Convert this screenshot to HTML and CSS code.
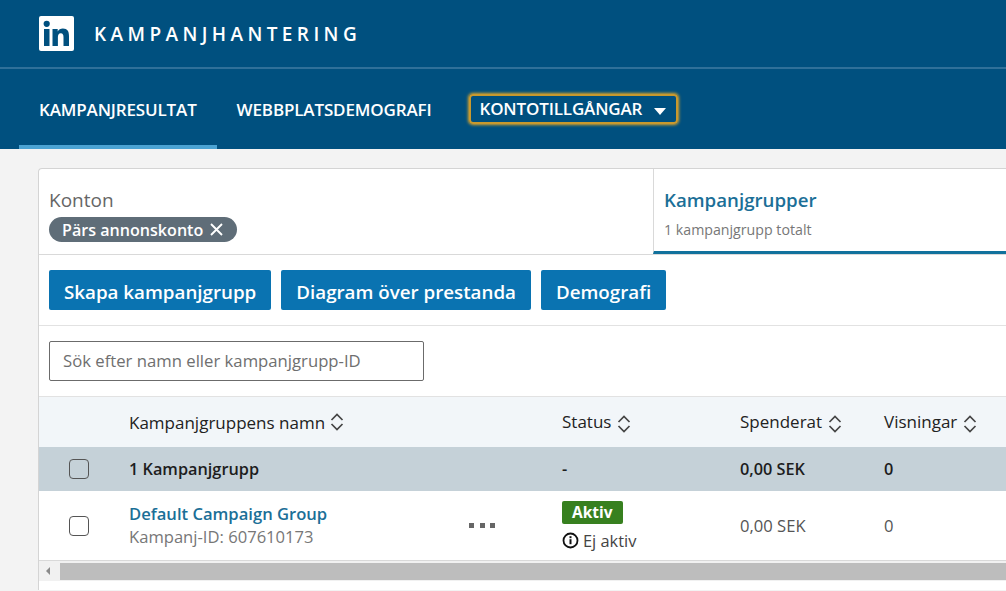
FILE: index.html
```html
<!DOCTYPE html>
<html lang="sv">
<head>
    <meta charset="UTF-8">
    <meta name="viewport" content="width=device-width, initial-scale=1.0">
    <title>Kampanjhantering</title>
    <link rel="stylesheet" href="styles.css">
</head>
<body>

<header class="topbar">
    <svg class="logo" width="35" height="35" viewBox="0 0 35 35">
        <rect width="35" height="35" rx="2" fill="#fff"/>
        <rect x="5" y="13" width="5.5" height="17" fill="#00507f"/>
        <circle cx="7.7" cy="7.8" r="3.1" fill="#00507f"/>
        <path d="M13.5 13h5.2v2.4c.9-1.6 2.8-2.8 5.2-2.8 4.6 0 6.1 2.9 6.1 7.4V30h-5.5v-8.8c0-2.2-.6-3.9-2.7-3.9-2.3 0-2.9 1.8-2.9 3.9V30h-5.4z" fill="#00507f"/>
    </svg>
    <span class="brand">KAMPANJHANTERING</span>
</header>

<nav class="mainnav">
    <a class="navlink active">KAMPANJRESULTAT</a>
    <a class="navlink">WEBBPLATSDEMOGRAFI</a>
    <a class="navlink focused">KONTOTILLGÅNGAR <span class="caret"></span></a>
</nav>

<main class="content">
    <div class="card">
        <div class="tabs">
            <div class="tab-accounts">
                <div class="tab-title">Konton</div>
                <span class="pill">Pärs annonskonto
                    <svg width="13" height="13" viewBox="0 0 13 13"><path d="M1 1l11 11M12 1L1 12" stroke="#fff" stroke-width="1.9" fill="none"/></svg>
                </span>
            </div>
            <div class="tab-groups">
                <div class="tab-title selected">Kampanjgrupper</div>
                <div class="tab-sub">1 kampanjgrupp totalt</div>
            </div>
        </div>

        <div class="actions">
            <button>Skapa kampanjgrupp</button>
            <button>Diagram över prestanda</button>
            <button>Demografi</button>
        </div>

        <div class="searchrow">
            <div class="search">Sök efter namn eller kampanjgrupp-ID</div>
        </div>

        <div class="row head">
            <div class="cell-check"></div>
            <div class="cell-name">Kampanjgruppens namn
                <svg class="sort" width="14" height="20" viewBox="0 0 14 20"><path d="M1.5 8L7 2.5 12.5 8M1.5 12L7 17.5 12.5 12" stroke="#444" stroke-width="1.7" fill="none"/></svg>
            </div>
            <div class="cell-status">Status
                <svg class="sort" width="14" height="20" viewBox="0 0 14 20"><path d="M1.5 8L7 2.5 12.5 8M1.5 12L7 17.5 12.5 12" stroke="#444" stroke-width="1.7" fill="none"/></svg>
            </div>
            <div class="cell-spent">Spenderat
                <svg class="sort" width="14" height="20" viewBox="0 0 14 20"><path d="M1.5 8L7 2.5 12.5 8M1.5 12L7 17.5 12.5 12" stroke="#444" stroke-width="1.7" fill="none"/></svg>
            </div>
            <div class="cell-views">Visningar
                <svg class="sort" width="14" height="20" viewBox="0 0 14 20"><path d="M1.5 8L7 2.5 12.5 8M1.5 12L7 17.5 12.5 12" stroke="#444" stroke-width="1.7" fill="none"/></svg>
            </div>
        </div>

        <div class="row total">
            <div class="cell-check"><span class="checkbox"></span></div>
            <div class="cell-name">1 Kampanjgrupp</div>
            <div class="cell-status">-</div>
            <div class="cell-spent">0,00 SEK</div>
            <div class="cell-views">0</div>
        </div>

        <div class="row item">
            <div class="cell-check"><span class="checkbox"></span></div>
            <div class="cell-name">
                <div class="name-block">
                    <a class="group-link">Default Campaign Group</a>
                    <div class="group-id">Kampanj-ID: 607610173</div>
                </div>
                <div class="dots"><i></i><i></i><i></i></div>
            </div>
            <div class="cell-status">
                <span class="badge">Aktiv</span>
                <div class="inactive">
                    <svg width="17" height="17" viewBox="0 0 17 17"><circle cx="8.5" cy="8.5" r="7" stroke="#111" stroke-width="1.8" fill="none"/><rect x="7.5" y="7.2" width="2" height="5" fill="#111"/><rect x="7.5" y="4.2" width="2" height="2" fill="#111"/></svg>
                    Ej aktiv
                </div>
            </div>
            <div class="cell-spent">0,00 SEK</div>
            <div class="cell-views">0</div>
        </div>

        <div class="scrollbar">
            <span class="arrow"></span>
            <div class="thumb"></div>
        </div>
    </div>
</main>

</body>
</html>
```

FILE: styles.css
```css
html, body {
    height: 100%;
    overflow: hidden;
}

body {
    font-family: "Open Sans", sans-serif;
    margin: 0;
    background-color: #f3f3f3;
    color: #222;
}

.topbar {
    height: 67px;
    background-color: #00507f;
    border-bottom: 2px solid #2f7099;
    display: flex;
    align-items: center;
    padding-left: 39px;
}

.logo {
    display: block;
}

.brand {
    color: #fff;
    font-size: 19px;
    font-weight: 600;
    letter-spacing: 4.4px;
    margin-left: 20px;
}

.mainnav {
    height: 80px;
    background-color: #00507f;
    display: flex;
    align-items: center;
    padding-left: 19px;
}

.navlink {
    color: #fff;
    font-size: 17px;
    font-weight: 600;
    letter-spacing: -0.15px;
    height: 80px;
    line-height: 81px;
    padding: 0 20px;
    box-sizing: border-box;
    white-space: nowrap;
}

.navlink.active {
    border-bottom: 4px solid #4ba3d3;
}

.navlink.focused {
    height: 30px;
    line-height: 24px;
    margin-left: 18px;
    padding: 0 10px 1px 8px;
    border: 2px solid #c9992e;
    border-radius: 4px;
    box-shadow: 0 0 3px 1px #d8a52c;
    display: flex;
    align-items: center;
}

.caret {
    display: inline-block;
    width: 0;
    height: 0;
    margin-left: 12px;
    margin-top: 5px;
    border-left: 6.5px solid transparent;
    border-right: 6.5px solid transparent;
    border-top: 7px solid #fff;
}

.content {
    padding: 19px 0 0 38px;
}

.card {
    height: 421px;
    background-color: #fff;
    border: 1px solid #d4d4d4;
    border-width: 1px 0 0 1px;
    border-radius: 4px 0 0 0;
}

.tabs {
    display: flex;
    height: 85px;
    border-bottom: 1px solid #d9d9d9;
}

.tab-accounts {
    width: 604px;
    padding: 18px 0 0 10px;
}

.tab-groups {
    flex: 1;
    padding: 18px 0 0 10px;
    border-left: 1px solid #d9d9d9;
    border-bottom: 3px solid #11719c;
    height: 64px;
}

.tab-title {
    font-size: 19px;
    line-height: 26px;
    color: #666;
}

.tab-title.selected {
    color: #1b6f97;
    font-size: 18.7px;
    font-weight: 600;
}

.tab-sub {
    font-size: 14.2px;
    line-height: 20px;
    margin-top: 7px;
    color: #777;
}

.pill {
    display: inline-flex;
    align-items: center;
    gap: 7px;
    height: 25px;
    margin-top: 4px;
    padding: 0 14px 0 13px;
    background-color: #5f6d78;
    border-radius: 13px;
    color: #fff;
    font-size: 16.1px;
    font-weight: 600;
}

.actions {
    display: flex;
    gap: 10px;
    height: 71px;
    padding: 15px 0 0 10px;
    box-sizing: border-box;
    border-bottom: 1px solid #e2e2e2;
}

button {
    height: 40px;
    padding: 3px 15px 0;
    background-color: #0a73b1;
    color: #fff;
    font-family: "Open Sans", sans-serif;
    font-size: 18.75px;
    font-weight: 600;
    border: none;
    border-radius: 2px;
}

.searchrow {
    height: 71px;
    padding: 15px 0 0 10px;
    box-sizing: border-box;
    border-bottom: 1px solid #e2e2e2;
}

.search {
    width: 375px;
    height: 40px;
    box-sizing: border-box;
    padding-left: 13px;
    line-height: 38px;
    font-size: 16.7px;
    color: #6f6f6f;
    border: 1px solid #6b6b6b;
    border-radius: 2px;
    background-color: #fff;
}

.row {
    display: flex;
    align-items: center;
    font-size: 16.6px;
}

.cell-check {
    width: 80px;
    padding-right: 10px;
    flex: none;
    display: flex;
    justify-content: center;
}

.cell-name {
    width: 433px;
    flex: none;
    display: flex;
    align-items: center;
}

.cell-status {
    width: 178px;
    flex: none;
}

.cell-spent {
    width: 144px;
    flex: none;
}

.cell-views {
    flex: 1;
}

.head {
    height: 50px;
    background-color: #f2f6f9;
    font-size: 17px;
}

.sort {
    margin-left: 5px;
    vertical-align: middle;
}

.cell-status .sort, .cell-spent .sort, .cell-views .sort {
    margin-left: 1px;
}

.total {
    height: 44px;
    background-color: #c5d1d8;
    font-weight: 600;
    color: #1d1d1d;
    font-size: 16.3px;
}

.item {
    height: 70px;
    box-sizing: border-box;
    border-bottom: 1px solid #d9d9d9;
    color: #555;
}

.checkbox {
    display: block;
    width: 18px;
    height: 18px;
    border: 1px solid #555;
    border-radius: 4px;
}

.item .checkbox {
    background-color: #fff;
}

.name-block {
    width: 340px;
}

.group-link {
    display: block;
    color: #1b6f97;
    font-weight: 600;
    line-height: 23px;
}

.group-id {
    color: #777;
    line-height: 24px;
}

.dots {
    display: flex;
    gap: 5.5px;
}

.dots i {
    display: block;
    width: 5px;
    height: 5px;
    background-color: #666;
}

.badge {
    display: inline-block;
    height: 23px;
    line-height: 23px;
    padding: 0 10px;
    border-radius: 2px;
    background-color: #37801f;
    color: #fff;
    font-weight: 700;
    font-size: 15.5px;
}

.inactive {
    display: flex;
    align-items: center;
    gap: 4px;
    font-size: 16.4px;
    line-height: 22px;
    margin-top: 6px;
    color: #444;
}

.scrollbar {
    display: flex;
    align-items: center;
    height: 20px;
    background-color: #f1f1f1;
}

.arrow {
    width: 0;
    height: 0;
    margin-left: 7px;
    border-top: 4px solid transparent;
    border-bottom: 4px solid transparent;
    border-right: 4px solid #8a8a8a;
}

.thumb {
    margin-left: 10px;
    flex: 1;
    height: 17px;
    background-color: #bdbdbd;
}
```
